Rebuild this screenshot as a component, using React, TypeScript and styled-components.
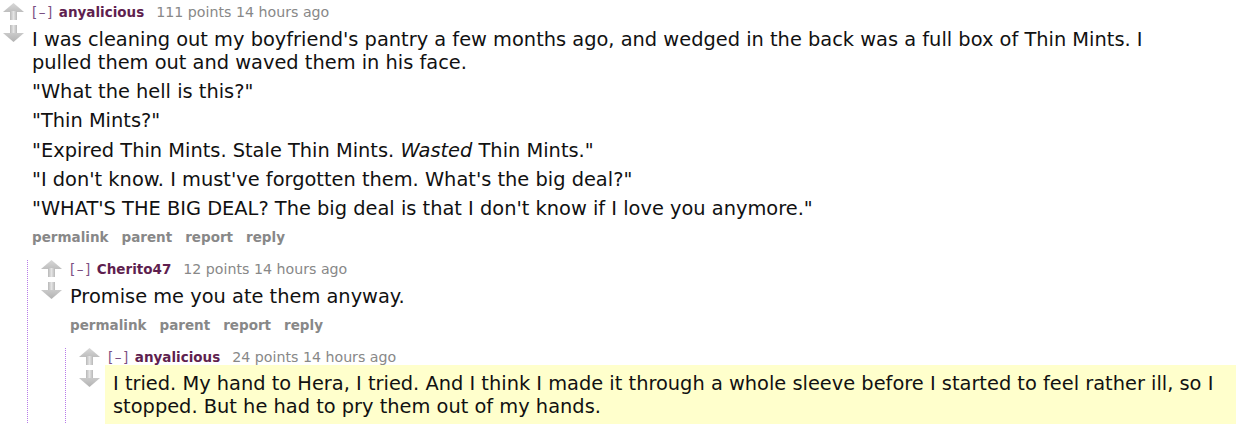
import React from "react";
import styled, { createGlobalStyle } from "styled-components";

const GlobalStyle = createGlobalStyle`
  html, body { margin: 0; padding: 0; background: #ffffff; }
  body { font-family: "DejaVu Sans", Verdana, sans-serif; color: #222; }
`;

const Page = styled.div`
  padding: 3px 0 0 3px;
  overflow: hidden;
`;

const CommentBox = styled.div``;

const Row = styled.div`
  display: flex;
  align-items: flex-start;
`;

const Midcol = styled.div`
  width: 20px;
  flex: 0 0 20px;
  margin-right: 9px;
  display: flex;
  flex-direction: column;
  gap: 5px;
`;

const Entry = styled.div`
  flex: 1 1 auto;
  min-width: 0;
`;

const Tagline = styled.div`
  margin-top: 1px;
  font-size: 13.5px;
  line-height: 16px;
  color: #888;
  white-space: nowrap;
`;

const Expand = styled.span`
  color: #7a4f82;
  letter-spacing: 1.5px;
  margin-right: 5px;
`;

const Author = styled.span`
  color: #5f1f4f;
  font-weight: bold;
  margin-right: 12px;
`;

const Score = styled.span`
  font-size: 14.2px;
`;

const Body = styled.div<{ $highlight?: boolean }>`
  margin-top: ${(p) => (p.$highlight ? "0" : "7.7px")};
  padding: ${(p) => (p.$highlight ? "7px 6px 7px 8px" : "0")};
  margin-left: ${(p) => (p.$highlight ? "-3px" : "0")};
  background: ${(p) => (p.$highlight ? "#ffffcc" : "transparent")};
  max-width: ${(p) => (p.$highlight ? "none" : "60em")};
  font-size: 19.4px;
  line-height: 23px;
  color: #111;
`;

const Para = styled.p`
  margin: 0 0 6.3px 0;
  &:last-child { margin-bottom: 0; }
`;

const Buttons = styled.ul`
  list-style: none;
  margin: 9px 0 0 0;
  padding: 0;
  display: flex;
  gap: 13px;
  font-size: 13.5px;
  line-height: 16px;
  font-weight: bold;
  color: #888;
`;

const Child = styled.div<{ $top: number }>`
  margin-top: ${(p) => p.$top}px;
  margin-left: 24px;
  border-left: 1px dotted #b77ce8;
  padding-left: 13px;
`;

const Arrow: React.FC<{ down?: boolean }> = ({ down }) => (
  <svg width="21" height="17" viewBox="0 0 21 17" style={{ display: "block" }}>
    <defs>
      <linearGradient id={down ? "gd" : "gu"} x1="0" y1="0" x2="1" y2="0">
        <stop offset="0" stopColor="#b8b8b8" />
        <stop offset="0.5" stopColor="#e4e4e4" />
        <stop offset="1" stopColor="#b8b8b8" />
      </linearGradient>
      <linearGradient id={down ? "hd" : "hu"} x1="0" y1="0" x2="0" y2="1">
        <stop offset="0" stopColor={down ? "#cacaca" : "#d8d8d8"} />
        <stop offset="1" stopColor={down ? "#b2b2b2" : "#bebebe"} />
      </linearGradient>
    </defs>
    {down ? (
      <g>
        <rect x="7" y="0" width="7" height="9" fill="url(#gd)" />
        <path d="M0 8 L21 8 L10.5 17 Z" fill="url(#hd)" />
      </g>
    ) : (
      <g>
        <path d="M10.5 0 L21 9 L0 9 Z" fill="url(#hu)" />
        <rect x="7" y="8" width="7" height="9" fill="url(#gu)" />
      </g>
    )}
  </svg>
);

type CommentProps = {
  author: string;
  points: number;
  paragraphs: React.ReactNode[];
  highlight?: boolean;
  showButtons?: boolean;
  children?: React.ReactNode;
  childTop?: number;
};

const Comment: React.FC<CommentProps> = ({
  author,
  points,
  paragraphs,
  highlight,
  showButtons = true,
  children,
  childTop = 15,
}) => (
  <CommentBox>
    <Row>
      <Midcol>
        <Arrow />
        <Arrow down />
      </Midcol>
      <Entry>
        <Tagline>
          <Expand>[–]</Expand>
          <Author>{author}</Author>
          <Score>{points} points 14 hours ago</Score>
        </Tagline>
        <Body $highlight={highlight}>
          {paragraphs.map((p, i) => (
            <Para key={i}>{p}</Para>
          ))}
        </Body>
        {showButtons && (
          <Buttons>
            <li>permalink</li>
            <li>parent</li>
            <li>report</li>
            <li>reply</li>
          </Buttons>
        )}
      </Entry>
    </Row>
    {children && <Child $top={childTop}>{children}</Child>}
  </CommentBox>
);

export default function App() {
  return (
    <Page>
      <GlobalStyle />
      <Comment
        author="anyalicious"
        points={111}
        childTop={15}
        paragraphs={[
          "I was cleaning out my boyfriend's pantry a few months ago, and wedged in the back was a full box of Thin Mints. I pulled them out and waved them in his face.",
          '"What the hell is this?"',
          '"Thin Mints?"',
          <>
            "Expired Thin Mints. Stale Thin Mints. <em>Wasted</em> Thin Mints."
          </>,
          '"I don\'t know. I must\'ve forgotten them. What\'s the big deal?"',
          '"WHAT\'S THE BIG DEAL? The big deal is that I don\'t know if I love you anymore."',
        ]}
      >
        <Comment
          author="Cherito47"
          points={12}
          childTop={15}
          paragraphs={["Promise me you ate them anyway."]}
        >
          <Comment
            author="anyalicious"
            points={24}
            highlight
            showButtons={false}
            paragraphs={[
              "I tried. My hand to Hera, I tried. And I think I made it through a whole sleeve before I started to feel rather ill, so I stopped. But he had to pry them out of my hands.",
            ]}
          />
        </Comment>
      </Comment>
    </Page>
  );
}
